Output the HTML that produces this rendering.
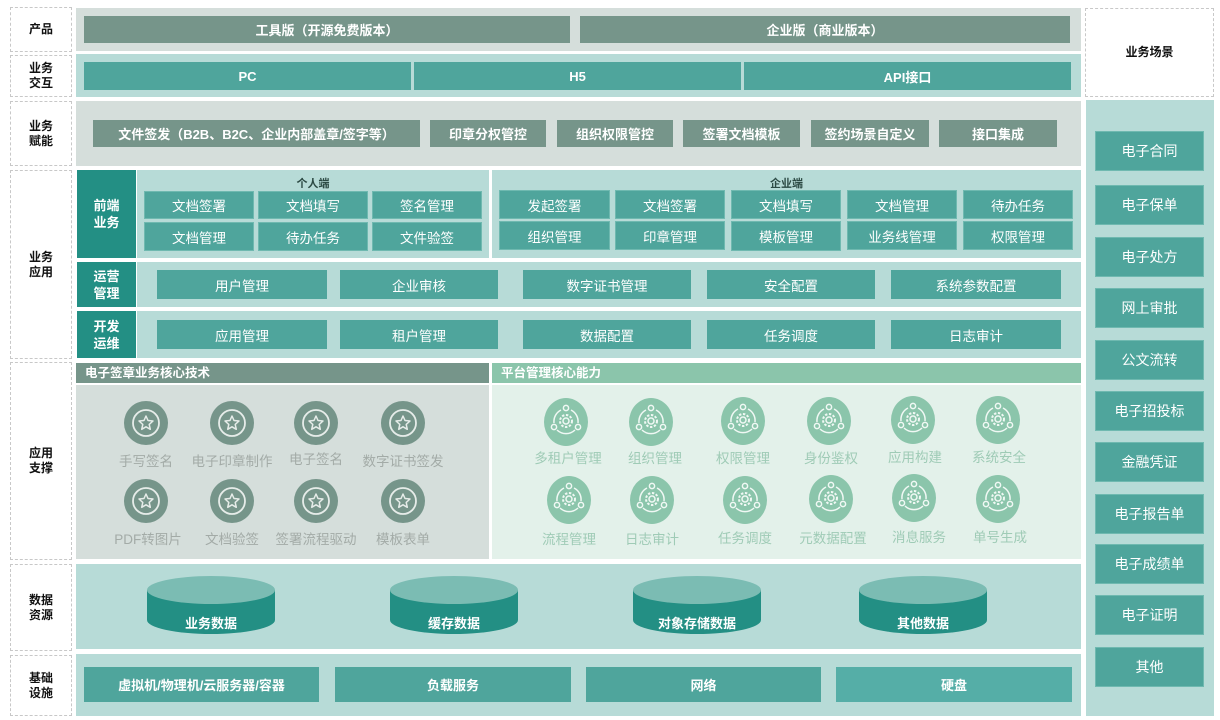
<!DOCTYPE html>
<html><head><meta charset="utf-8"><style>
*{margin:0;padding:0;box-sizing:border-box}
body{width:1220px;height:720px;background:#fff;position:relative;overflow:hidden;font-family:"Liberation Sans","Noto Sans CJK SC",sans-serif}
.a{position:absolute}
.lab{position:absolute;border:1px dashed #c8c8c8;display:flex;align-items:center;justify-content:center;text-align:center;font-weight:bold;font-size:12px;line-height:15px;color:#111}
.bg1{background:#d5dedb}.bg2{background:#b7dbd7}
.bar{position:absolute;display:flex;align-items:center;justify-content:center;color:#fff;font-size:13px;font-weight:bold}
.g{background:#76958a}.t{background:#4fa59c}
.c{position:absolute;display:flex;align-items:center;justify-content:center;color:#fff;font-size:13.5px;background:#4fa59c;border:1px solid #6fb9b0}
.dl{position:absolute;background:#238f84;color:#fff;font-weight:bold;font-size:13px;line-height:17px;display:flex;align-items:center;justify-content:center;text-align:center}
.ic{position:absolute;width:90px;text-align:center;font-size:13.5px}
.r{position:absolute;left:1095px;width:109px;height:40px;background:#4fa59c;border:1px solid #6fb9b0;color:#fff;font-size:14px;display:flex;align-items:center;justify-content:center}
</style></head><body>
<!-- left labels -->
<div class="lab" style="left:10px;top:7px;width:62px;height:45px">产品</div>
<div class="lab" style="left:10px;top:55px;width:62px;height:42px">业务<br>交互</div>
<div class="lab" style="left:10px;top:101px;width:62px;height:65px">业务<br>赋能</div>
<div class="lab" style="left:10px;top:170px;width:62px;height:189px">业务<br>应用</div>
<div class="lab" style="left:10px;top:362px;width:62px;height:198px">应用<br>支撑</div>
<div class="lab" style="left:10px;top:564px;width:62px;height:87px">数据<br>资源</div>
<div class="lab" style="left:10px;top:655px;width:62px;height:61px">基础<br>设施</div>

<!-- row1 -->
<div class="a bg1" style="left:76px;top:8px;width:1005px;height:43px"></div>
<div class="bar g" style="left:84px;top:16px;width:486px;height:27px">工具版（开源免费版本）</div>
<div class="bar g" style="left:580px;top:16px;width:490px;height:27px">企业版（商业版本）</div>
<!-- row2 -->
<div class="a bg2" style="left:76px;top:54px;width:1005px;height:43px"></div>
<div class="bar t" style="left:84px;top:62px;width:327px;height:28px">PC</div>
<div class="bar t" style="left:414px;top:62px;width:327px;height:28px">H5</div>
<div class="bar t" style="left:744px;top:62px;width:327px;height:28px">API接口</div>
<!-- row3 -->
<div class="a bg1" style="left:76px;top:101px;width:1005px;height:65px"></div>
<div class="bar g" style="left:93px;top:120px;width:327px;height:27px">文件签发（B2B、B2C、企业内部盖章/签字等）</div>
<div class="bar g" style="left:430px;top:120px;width:116px;height:27px">印章分权管控</div>
<div class="bar g" style="left:557px;top:120px;width:116px;height:27px">组织权限管控</div>
<div class="bar g" style="left:683px;top:120px;width:117px;height:27px">签署文档模板</div>
<div class="bar g" style="left:811px;top:120px;width:118px;height:27px">签约场景自定义</div>
<div class="bar g" style="left:939px;top:120px;width:118px;height:27px">接口集成</div>

<!-- 前端业务 -->
<div class="dl" style="left:77px;top:170px;width:59px;height:88px">前端<br>业务</div>
<div class="a bg2" style="left:137px;top:170px;width:352px;height:88px"></div>
<div class="a" style="left:137px;top:175px;width:352px;text-align:center;font-size:11px;font-weight:bold;color:#2c4a44">个人端</div>
<div class="c" style="left:144px;top:191px;width:110px;height:28px">文档签署</div>
<div class="c" style="left:258px;top:191px;width:110px;height:28px">文档填写</div>
<div class="c" style="left:372px;top:191px;width:110px;height:28px">签名管理</div>
<div class="c" style="left:144px;top:222px;width:110px;height:29px">文档管理</div>
<div class="c" style="left:258px;top:222px;width:110px;height:29px">待办任务</div>
<div class="c" style="left:372px;top:222px;width:110px;height:29px">文件验签</div>
<div class="a bg2" style="left:492px;top:170px;width:589px;height:88px"></div>
<div class="a" style="left:492px;top:175px;width:589px;text-align:center;font-size:11px;font-weight:bold;color:#2c4a44">企业端</div>
<div class="c" style="left:499px;top:190px;width:111px;height:29px">发起签署</div>
<div class="c" style="left:615px;top:190px;width:110px;height:29px">文档签署</div>
<div class="c" style="left:731px;top:190px;width:110px;height:29px">文档填写</div>
<div class="c" style="left:847px;top:190px;width:110px;height:29px">文档管理</div>
<div class="c" style="left:963px;top:190px;width:110px;height:29px">待办任务</div>
<div class="c" style="left:499px;top:221px;width:111px;height:29px">组织管理</div>
<div class="c" style="left:615px;top:221px;width:110px;height:29px">印章管理</div>
<div class="c" style="left:731px;top:221px;width:110px;height:30px">模板管理</div>
<div class="c" style="left:847px;top:221px;width:110px;height:29px">业务线管理</div>
<div class="c" style="left:963px;top:221px;width:110px;height:29px">权限管理</div>

<!-- 运营管理 -->
<div class="dl" style="left:77px;top:262px;width:59px;height:45px">运营<br>管理</div>
<div class="a bg2" style="left:137px;top:262px;width:944px;height:45px"></div>
<div class="c" style="left:157px;top:270px;width:170px;height:29px;border:none">用户管理</div>
<div class="c" style="left:340px;top:270px;width:158px;height:29px;border:none">企业审核</div>
<div class="c" style="left:523px;top:270px;width:168px;height:29px;border:none">数字证书管理</div>
<div class="c" style="left:707px;top:270px;width:168px;height:29px;border:none">安全配置</div>
<div class="c" style="left:891px;top:270px;width:170px;height:29px;border:none">系统参数配置</div>
<!-- 开发运维 -->
<div class="dl" style="left:77px;top:311px;width:59px;height:47px">开发<br>运维</div>
<div class="a bg2" style="left:137px;top:311px;width:944px;height:47px"></div>
<div class="c" style="left:157px;top:320px;width:170px;height:29px;border:none">应用管理</div>
<div class="c" style="left:340px;top:320px;width:158px;height:29px;border:none">租户管理</div>
<div class="c" style="left:523px;top:320px;width:168px;height:29px;border:none">数据配置</div>
<div class="c" style="left:707px;top:320px;width:168px;height:29px;border:none">任务调度</div>
<div class="c" style="left:891px;top:320px;width:170px;height:29px;border:none">日志审计</div>

<!-- 应用支撑 -->
<div class="a" style="left:76px;top:363px;width:413px;height:20px;background:#76958a;color:#fff;font-weight:bold;font-size:12.5px;line-height:20px;padding-left:9px">电子签章业务核心技术</div>
<div class="a" style="left:492px;top:363px;width:589px;height:20px;background:#8bc5ab;color:#fff;font-weight:bold;font-size:12.5px;line-height:20px;padding-left:9px">平台管理核心能力</div>
<div class="a bg1" style="left:76px;top:385px;width:413px;height:174px"></div>
<div class="a" style="left:492px;top:385px;width:589px;height:174px;background:#e3f1ea"></div>

<svg class="a" style="left:0;top:0" width="1220" height="720">
<defs>
<g id="st"><circle r="22" fill="#76958a"/><circle r="13" fill="none" stroke="#e6ece9" stroke-width="1.8"/><path d="M0,-7 L2,-2.5 L7,-2 L3.2,1.4 L4.3,6.3 L0,3.8 L-4.3,6.3 L-3.2,1.4 L-7,-2 L-2,-2.5Z" fill="none" stroke="#e6ece9" stroke-width="1.5" stroke-linejoin="round"/></g>
<g id="gr"><ellipse rx="22" ry="24" fill="#8bc5ab"/>
<g fill="none" stroke="#f0f8f4" stroke-width="1.5"><path d="M-5,-12 A13 13 0 0 0 -12,1"/><path d="M5,-12 A13 13 0 0 1 12,1"/><path d="M-9,8 A13 13 0 0 0 9,8"/><circle cx="0" cy="-14" r="2.6"/><circle cx="-12" cy="5" r="2.6"/><circle cx="12" cy="5" r="2.6"/><circle cx="0" cy="-1" r="3"/><circle cx="0" cy="-1" r="6" stroke-dasharray="2.4 1.6" stroke-width="2"/></g></g>
</defs>
<use href="#st" x="146" y="423"/><use href="#st" x="232" y="423"/><use href="#st" x="316" y="423"/><use href="#st" x="403" y="423"/>
<use href="#st" x="146" y="501"/><use href="#st" x="232" y="501"/><use href="#st" x="316" y="501"/><use href="#st" x="403" y="501"/>
<use href="#gr" x="566" y="422"/><use href="#gr" x="651" y="422"/><use href="#gr" x="743" y="421"/><use href="#gr" x="829" y="421"/><use href="#gr" x="913" y="420"/><use href="#gr" x="998" y="420"/>
<use href="#gr" x="569" y="500"/><use href="#gr" x="652" y="500"/><use href="#gr" x="745" y="500"/><use href="#gr" x="831" y="499"/><use href="#gr" x="914" y="498"/><use href="#gr" x="998" y="499"/>
</svg>
<div style="color:#a3aba7">
<div class="ic" style="left:101px;top:450px">手写签名</div>
<div class="ic" style="left:187px;top:450px">电子印章制作</div>
<div class="ic" style="left:271px;top:448px">电子签名</div>
<div class="ic" style="left:358px;top:450px">数字证书签发</div>
<div class="ic" style="left:103px;top:528px">PDF转图片</div>
<div class="ic" style="left:187px;top:528px">文档验签</div>
<div class="ic" style="left:271px;top:528px">签署流程驱动</div>
<div class="ic" style="left:358px;top:528px">模板表单</div>
</div>
<div style="color:#9fcbb6">
<div class="ic" style="left:523px;top:447px">多租户管理</div>
<div class="ic" style="left:610px;top:447px">组织管理</div>
<div class="ic" style="left:698px;top:447px">权限管理</div>
<div class="ic" style="left:786px;top:447px">身份鉴权</div>
<div class="ic" style="left:870px;top:446px">应用构建</div>
<div class="ic" style="left:954px;top:446px">系统安全</div>
<div class="ic" style="left:524px;top:528px">流程管理</div>
<div class="ic" style="left:607px;top:528px">日志审计</div>
<div class="ic" style="left:700px;top:527px">任务调度</div>
<div class="ic" style="left:788px;top:527px">元数据配置</div>
<div class="ic" style="left:874px;top:526px">消息服务</div>
<div class="ic" style="left:955px;top:526px">单号生成</div>
</div>

<!-- 数据资源 -->
<div class="a bg2" style="left:76px;top:564px;width:1005px;height:85px"></div>
<svg class="a" style="left:0;top:560px" width="1090" height="90">
<g id="cy"><path d="M147,30 L147,60 A64 14 0 0 0 275,60 L275,30Z" fill="#238f84"/><ellipse cx="211" cy="30" rx="64" ry="14" fill="#7bbcb3"/></g>
<g transform="translate(243,0)"><path d="M147,30 L147,60 A64 14 0 0 0 275,60 L275,30Z" fill="#238f84"/><ellipse cx="211" cy="30" rx="64" ry="14" fill="#7bbcb3"/></g>
<g transform="translate(486,0)"><path d="M147,30 L147,60 A64 14 0 0 0 275,60 L275,30Z" fill="#238f84"/><ellipse cx="211" cy="30" rx="64" ry="14" fill="#7bbcb3"/></g>
<g transform="translate(712,0)"><path d="M147,30 L147,60 A64 14 0 0 0 275,60 L275,30Z" fill="#238f84"/><ellipse cx="211" cy="30" rx="64" ry="14" fill="#7bbcb3"/></g>
</svg>
<div class="bar" style="left:147px;top:612px;width:128px;height:20px">业务数据</div>
<div class="bar" style="left:390px;top:612px;width:128px;height:20px">缓存数据</div>
<div class="bar" style="left:633px;top:612px;width:128px;height:20px">对象存储数据</div>
<div class="bar" style="left:859px;top:612px;width:128px;height:20px">其他数据</div>

<!-- 基础设施 -->
<div class="a bg2" style="left:76px;top:654px;width:1005px;height:62px"></div>
<div class="bar t" style="left:84px;top:667px;width:235px;height:35px">虚拟机/物理机/云服务器/容器</div>
<div class="bar t" style="left:335px;top:667px;width:236px;height:35px">负载服务</div>
<div class="bar t" style="left:586px;top:667px;width:235px;height:35px">网络</div>
<div class="bar" style="left:836px;top:667px;width:236px;height:35px;background:#55aea7">硬盘</div>

<!-- right -->
<div class="lab" style="left:1085px;top:8px;width:129px;height:89px">业务场景</div>
<div class="a bg2" style="left:1086px;top:100px;width:128px;height:616px"></div>
<div class="r" style="top:131px">电子合同</div>
<div class="r" style="top:185px">电子保单</div>
<div class="r" style="top:237px">电子处方</div>
<div class="r" style="top:288px">网上审批</div>
<div class="r" style="top:340px">公文流转</div>
<div class="r" style="top:391px">电子招投标</div>
<div class="r" style="top:442px">金融凭证</div>
<div class="r" style="top:494px">电子报告单</div>
<div class="r" style="top:544px">电子成绩单</div>
<div class="r" style="top:595px">电子证明</div>
<div class="r" style="top:647px">其他</div>
</body></html>
